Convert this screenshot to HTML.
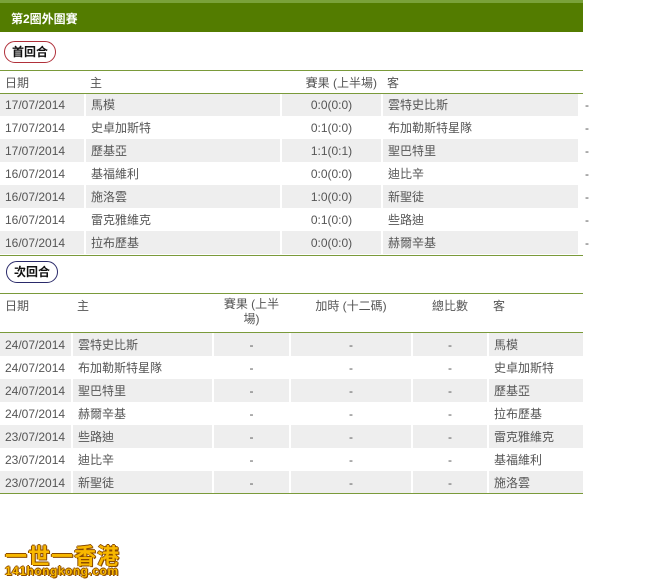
<!DOCTYPE html>
<html><head><meta charset="utf-8"><style>
*{margin:0;padding:0;box-sizing:border-box}
body{width:652px;height:584px;background:#fff;position:relative;overflow:hidden;font-family:"Liberation Sans","Noto Sans CJK TC",sans-serif;font-size:12px;color:#555}
.hdr{position:absolute;left:0;top:0;width:583px;height:32px;background:#537c00;border-top:3px solid #7aa23a}
.hdr span{position:absolute;left:11px;top:7px;color:#fff;font-weight:bold;font-size:12px}
.tag{position:absolute;height:22px;border-radius:11px;padding:0 7px;font-weight:bold;color:#111;font-size:12px;line-height:20px;background:#fff}
table{position:absolute;left:0;border-collapse:collapse;table-layout:fixed}
td{height:23px;padding:0 5px;white-space:nowrap;border-left:2px solid #fff}
td:first-child{border-left:none}
tr.g td{background:#eee}
tr.h td{border-left:none;vertical-align:top;padding-top:4px}
.c{text-align:center}.r{text-align:right}
.line{position:absolute;left:0;height:1px;background:#7a9a3a;z-index:5}
.logo{position:absolute;left:5px;font-weight:bold;color:#f8b800;text-shadow:1px 1px 0 #8a4a00,-1px 0 0 #8a4a00,0 -1px 0 #8a4a00,1px 0 0 #8a4a00}
</style></head><body>
<div class="hdr"><span>第2圈外圍賽</span></div>
<div class="tag" style="left:4px;top:41px;border:1px solid #b0303a">首回合</div>
<div class="line" style="top:70px;width:583px"></div>
<div class="line" style="top:93px;width:583px"></div>
<table style="top:70px;width:595px">
<colgroup><col style="width:85px"><col style="width:196px"><col style="width:101px"><col style="width:197px"><col style="width:16px"></colgroup>
<tr class="h"><td>日期</td><td>主</td><td class="r">賽果 (上半場)</td><td>客</td><td></td></tr>
<tr class="g"><td>17/07/2014</td><td>馬模</td><td class="c">0:0(0:0)</td><td>雲特史比斯</td><td style="background:#fff">-</td></tr>
<tr><td>17/07/2014</td><td>史卓加斯特</td><td class="c">0:1(0:0)</td><td>布加勒斯特星隊</td><td>-</td></tr>
<tr class="g"><td>17/07/2014</td><td>歷基亞</td><td class="c">1:1(0:1)</td><td>聖巴特里</td><td style="background:#fff">-</td></tr>
<tr><td>16/07/2014</td><td>基福維利</td><td class="c">0:0(0:0)</td><td>迪比辛</td><td>-</td></tr>
<tr class="g"><td>16/07/2014</td><td>施洛雲</td><td class="c">1:0(0:0)</td><td>新聖徒</td><td style="background:#fff">-</td></tr>
<tr><td>16/07/2014</td><td>雷克雅維克</td><td class="c">0:1(0:0)</td><td>些路迪</td><td>-</td></tr>
<tr class="g"><td>16/07/2014</td><td>拉布歷基</td><td class="c">0:0(0:0)</td><td>赫爾辛基</td><td style="background:#fff">-</td></tr>
</table>
<div class="line" style="top:255px;width:583px"></div>
<div class="tag" style="left:6px;top:261px;border:1px solid #2a2a6a">次回合</div>
<div class="line" style="top:293px;width:583px"></div>
<div class="line" style="top:332px;width:583px"></div>
<table style="top:293px;width:583px">
<colgroup><col style="width:72px"><col style="width:141px"><col style="width:77px"><col style="width:122px"><col style="width:76px"><col style="width:95px"></colgroup>
<tr class="h"><td style="height:40px">日期</td><td>主</td><td class="c" style="white-space:normal;line-height:15px;padding-top:4px">賽果 (上半場)</td><td class="c">加時 (十二碼)</td><td class="c">總比數</td><td>客</td></tr>
<tr class="g"><td>24/07/2014</td><td>雲特史比斯</td><td class="c">-</td><td class="c">-</td><td class="c">-</td><td>馬模</td></tr>
<tr><td>24/07/2014</td><td>布加勒斯特星隊</td><td class="c">-</td><td class="c">-</td><td class="c">-</td><td>史卓加斯特</td></tr>
<tr class="g"><td>24/07/2014</td><td>聖巴特里</td><td class="c">-</td><td class="c">-</td><td class="c">-</td><td>歷基亞</td></tr>
<tr><td>24/07/2014</td><td>赫爾辛基</td><td class="c">-</td><td class="c">-</td><td class="c">-</td><td>拉布歷基</td></tr>
<tr class="g"><td>23/07/2014</td><td>些路迪</td><td class="c">-</td><td class="c">-</td><td class="c">-</td><td>雷克雅維克</td></tr>
<tr><td>23/07/2014</td><td>迪比辛</td><td class="c">-</td><td class="c">-</td><td class="c">-</td><td>基福維利</td></tr>
<tr class="g"><td>23/07/2014</td><td>新聖徒</td><td class="c">-</td><td class="c">-</td><td class="c">-</td><td>施洛雲</td></tr>
</table>
<div class="line" style="top:493px;width:583px"></div>
<div class="logo" style="top:539px;font-size:22px;letter-spacing:1px">一世一香港</div>
<div class="logo" style="top:564px;font-size:12px;letter-spacing:0.5px">141hongkong.com</div>
</body></html>
